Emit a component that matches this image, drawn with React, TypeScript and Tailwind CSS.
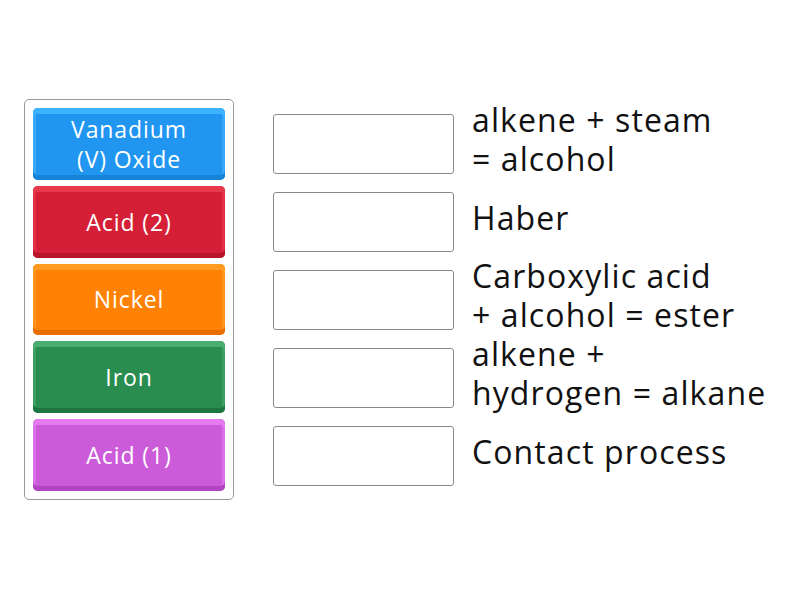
const tiles = [
  {
    label: "Vanadium (V) Oxide",
    cls: "bg-[#2196f0] shadow-[inset_0_6px_0_#3db2ff,inset_0_-5px_0_#1683d6,inset_3px_0_0_#3aa8fa,inset_-3px_0_0_#3aa8fa]",
  },
  {
    label: "Acid (2)",
    cls: "bg-[#d41f36] shadow-[inset_0_6px_0_#e9394d,inset_0_-5px_0_#b8142a,inset_3px_0_0_#e23046,inset_-3px_0_0_#e23046]",
  },
  {
    label: "Nickel",
    cls: "bg-[#ff8205] shadow-[inset_0_6px_0_#ff9b22,inset_0_-5px_0_#e86c00,inset_3px_0_0_#ff9418,inset_-3px_0_0_#ff9418]",
  },
  {
    label: "Iron",
    cls: "bg-[#2a8d50] shadow-[inset_0_6px_0_#48ad6d,inset_0_-5px_0_#1e7640,inset_3px_0_0_#3da062,inset_-3px_0_0_#3da062]",
  },
  {
    label: "Acid (1)",
    cls: "bg-[#cc5bda] shadow-[inset_0_6px_0_#e47cf0,inset_0_-5px_0_#b044c2,inset_3px_0_0_#dc70ea,inset_-3px_0_0_#dc70ea]",
  },
];

// each answer is already split into the lines shown on screen
const answers = [
  ["alkene + steam", "= alcohol"],
  ["Haber"],
  ["Carboxylic acid", "+ alcohol = ester"],
  ["alkene +", "hydrogen = alkane"],
  ["Contact process"],
];

const App = () => {
  return (
    <div
      className="w-[800px] h-[600px] bg-white"
      style={{ fontFamily: "'Open Sans', 'Noto Sans', sans-serif" }}
    >
      <div className="flex pt-[99px] pl-[24px]">
        <div className="w-[210px] h-[401px] border border-[#9a9a9a] rounded-[5px] p-[8px] flex flex-col gap-[6px]">
          {tiles.map(t => (
            <div
              key={t.label}
              className={`h-[72px] w-[192px] rounded-[5px] flex items-center justify-center text-center text-white text-[23px] font-medium tracking-[0.9px] leading-[30px] px-6 ${t.cls}`}
            >
              {t.label}
            </div>
          ))}
        </div>
        <div className="ml-[39px] pt-[9px] flex flex-col gap-[6px]">
          {answers.map(a => (
            <div key={a.join(" ")} className="h-[72px] flex items-start">
              <div className="mt-[6px] w-[181px] h-[60px] border border-[#8a8a8a] rounded-[3px] bg-white shrink-0" />
              <div className="ml-[18px] h-[72px] -mt-[5px] flex flex-col justify-center text-[32px] tracking-[1.1px] leading-[39px] text-[#111] whitespace-nowrap">
                {a.map(line => (
                  <span key={line}>{line}</span>
                ))}
              </div>
            </div>
          ))}
        </div>
      </div>
    </div>
  );
};

export default App;
